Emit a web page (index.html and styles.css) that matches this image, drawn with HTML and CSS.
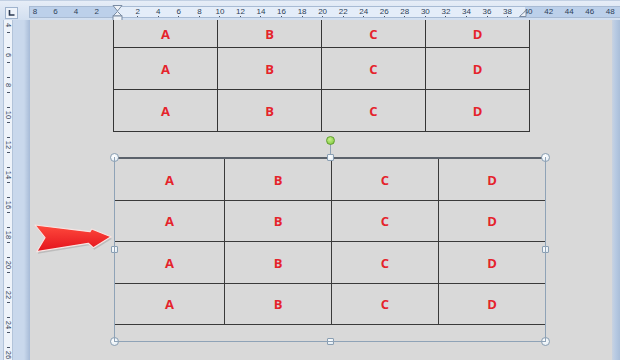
FILE: index.html
```html
<!DOCTYPE html>
<html>
<head>
<meta charset="utf-8">
<link rel="stylesheet" href="styles.css">
</head>
<body>
<div class="app">
  <div class="ruler-row">
    <div class="corner">
      <div class="tab-btn">
        <svg width="9" height="8" viewBox="0 0 9 8"><path d="M2.5 1 V6 H7.5" fill="none" stroke="#2b3a52" stroke-width="1.6"/></svg>
      </div>
    </div>
    <div class="hruler">
      <div class="track">
        <span class="n">8</span><span class="n">6</span><span class="n">4</span><span class="n">2</span><span class="n"></span>
        <span class="n t">2</span><span class="n t">4</span><span class="n t">6</span><span class="n t">8</span><span class="n t">10</span>
        <span class="n t">12</span><span class="n t">14</span><span class="n t">16</span><span class="n t">18</span><span class="n t">20</span>
        <span class="n t">22</span><span class="n t">24</span><span class="n t">26</span><span class="n t">28</span><span class="n t">30</span>
        <span class="n t">32</span><span class="n t">34</span><span class="n t">36</span><span class="n t">38</span><span class="n">40</span>
        <span class="n">42</span><span class="n">44</span><span class="n">46</span><span class="n">48</span>
      </div>
      <svg class="indent" width="11" height="16" viewBox="0 0 11 16">
        <path d="M1 0.5 H10 L5.5 6 Z" fill="#eef2f7" stroke="#7b8ca3" stroke-width="1"/>
        <path d="M5.5 6.5 L10 11 H1 Z" fill="#eef2f7" stroke="#7b8ca3" stroke-width="1"/>
        <rect x="1" y="11" width="9" height="4.5" fill="#eef2f7" stroke="#7b8ca3" stroke-width="1"/>
      </svg>
      <svg class="rindent" width="8" height="7" viewBox="0 0 8 7">
        <path d="M0.5 6.5 L7 0.5 V6.5 Z" fill="#eef2f7" stroke="#7b8ca3" stroke-width="1"/>
      </svg>
    </div>
  </div>
  <div class="body-row">
    <div class="vcol">
      <div class="vruler">
        <div class="vc"><i class="tk"></i><b class="lbl"><span>4</span></b><i class="tk"></i></div>
        <div class="vc"><i class="tk"></i><b class="lbl"><span>6</span></b><i class="tk"></i></div>
        <div class="vc"><i class="tk"></i><b class="lbl"><span>8</span></b><i class="tk"></i></div>
        <div class="vc"><i class="tk"></i><b class="lbl"><span>10</span></b><i class="tk"></i></div>
        <div class="vc"><i class="tk"></i><b class="lbl"><span>12</span></b><i class="tk"></i></div>
        <div class="vc"><i class="tk"></i><b class="lbl"><span>14</span></b><i class="tk"></i></div>
        <div class="vc"><i class="tk"></i><b class="lbl"><span>16</span></b><i class="tk"></i></div>
        <div class="vc"><i class="tk"></i><b class="lbl"><span>18</span></b><i class="tk"></i></div>
        <div class="vc"><i class="tk"></i><b class="lbl"><span>20</span></b><i class="tk"></i></div>
        <div class="vc"><i class="tk"></i><b class="lbl"><span>22</span></b><i class="tk"></i></div>
        <div class="vc"><i class="tk"></i><b class="lbl"><span>24</span></b><i class="tk"></i></div>
        <div class="vc"><i class="tk"></i><b class="lbl"><span>26</span></b><i class="tk"></i></div>
      </div>
    </div>
    <div class="page">
      <div class="tbl1">
        <div class="cell first">A</div><div class="cell first">B</div><div class="cell first">C</div><div class="cell first">D</div>
        <div class="cell">A</div><div class="cell">B</div><div class="cell">C</div><div class="cell">D</div>
        <div class="cell">A</div><div class="cell">B</div><div class="cell">C</div><div class="cell">D</div>
      </div>
      <div class="sel">
        <div class="tbl2">
          <div class="cell">A</div><div class="cell">B</div><div class="cell">C</div><div class="cell">D</div>
          <div class="cell">A</div><div class="cell">B</div><div class="cell">C</div><div class="cell">D</div>
          <div class="cell">A</div><div class="cell">B</div><div class="cell">C</div><div class="cell">D</div>
          <div class="cell">A</div><div class="cell">B</div><div class="cell">C</div><div class="cell">D</div>
        </div>
        <i class="stem"></i>
        <i class="rot"></i>
        <i class="h c tl"></i><i class="h c tr"></i><i class="h c bl"></i><i class="h c br"></i>
        <i class="h s tm"></i><i class="h s ml"></i><i class="h s mr"></i><i class="h s bm"></i>
      </div>
      <svg class="arrow" width="90" height="40" viewBox="0 0 90 40">
        <defs>
          <linearGradient id="ag" x1="0" y1="0" x2="0" y2="1">
            <stop offset="0" stop-color="#ff4a3d"/>
            <stop offset="1" stop-color="#e3121c"/>
          </linearGradient>
        </defs>
        <path d="M6 7 L61 13.7 L62.7 11 L82 18.7 L64.3 29.7 L59.3 25.3 L7.7 33.7 L16 19.7 Z" fill="#9a9a9a" opacity="0.45"/>
        <path d="M5 5 L60 11.7 L61.7 9 L81 16.7 L63.3 27.7 L58.3 23.3 L6.7 31.7 L15 17.7 Z" fill="url(#ag)" stroke="#f7e4e2" stroke-width="1.2" stroke-linejoin="round"/>
      </svg>
    </div>
    <div class="scroll"></div>
  </div>
</div>
</body>
</html>
```

FILE: styles.css
```css
* { box-sizing: border-box; margin: 0; padding: 0; }
html, body { width: 620px; height: 360px; overflow: hidden; }
body { font-family: "Liberation Sans", Arial, sans-serif; background: #c9d8ec; }

.app { display: flex; flex-direction: column; width: 620px; height: 360px; }

/* top ruler row */
.ruler-row {
  display: flex;
  height: 20px;
  flex: 0 0 20px;
  background: linear-gradient(#e6edf7, #d2dff0);
  border-top: 1px solid #c2d0e3;
}
.corner { width: 29px; flex: 0 0 29px; padding: 6px 0 0 5px; }
.tab-btn {
  width: 13px; height: 12px;
  border: 1px solid #9fb3cd;
  background: #eef3fa;
  display: flex; align-items: center; justify-content: center;
}
.hruler {
  position: relative;
  flex: 1;
  margin-top: 5px;
  height: 12px;
  border: 1px solid #a8bbd4;
  border-right: none;
  background: linear-gradient(to right, #bcd0ea 0 87px, #e4edf9 87px 495px, #bcd0ea 495px);
}
.track { display: flex; margin-left: -5.3px; }
.n {
  flex: 0 0 20.55px;
  display: flex; flex-direction: column; align-items: center;
  height: 10px;
  font-size: 8px; line-height: 9px;
  color: #2e3f58;
}
.n.t::after { content: ""; width: 1px; height: 1.5px; background: #4a5568; }
.indent { position: absolute; left: 82px; top: -2px; }
.rindent { position: absolute; left: 489px; top: 3px; }

/* body */
.body-row { display: flex; flex: 1; min-height: 0; }
.vcol {
  width: 30px; flex: 0 0 30px;
  display: flex;
  background: linear-gradient(to right, #d4e0f0 0 3px, #eef3fa 3px 13px, #c9d8ec 13px 24px, #a7bbd7 30px);
}
.vruler {
  margin-left: 3px;
  width: 10px;
  background: #eef3fa;
  border-left: 1px solid #b3c4da;
  border-right: 1px solid #b3c4da;
  overflow: hidden;
  display: flex; flex-direction: column;
}
.vc {
  flex: 0 0 30px;
  display: flex; flex-direction: column; align-items: center;
}
.vc:first-child { margin-top: -10px; }
.tk { display: block; width: 3px; height: 1px; background: #4a5568; margin-top: 7px; }
.lbl + .tk { margin-top: 0; }
.lbl {
  height: 14px; width: 8px;
  display: flex; align-items: center; justify-content: center;
  font-weight: normal;
}
.lbl span {
  display: block;
  transform: rotate(90deg);
  font-size: 7.5px; line-height: 8px;
  color: #2e3f58;
  white-space: nowrap;
}

.page {
  position: relative;
  flex: 1;
  background: #d9d9d9;
  overflow: hidden;
  display: flex; flex-direction: column; align-items: flex-start;
}
.scroll {
  width: 8px; flex: 0 0 8px;
  background: linear-gradient(to right, #c9d3e0, #b9cbe3 40%, #a9bed9);
}

/* tables */
.cell {
  background: #d9d9d9;
  display: flex; align-items: center; justify-content: center;
  color: #e5232b;
  font-family: "Open Sans", "Liberation Sans", sans-serif;
  font-weight: 700;
  font-size: 13px;
  line-height: 12px;
}
.cell.first { padding-top: 15px; }
.tbl1 {
  margin: -15px 0 0 83px;
  display: grid;
  grid-template-columns: repeat(4, 103px);
  grid-auto-rows: 41px;
  gap: 1px;
  padding: 1px;
  background: #353535;
}
.sel {
  position: relative;
  margin: 25px 0 0 84px;
  width: 432px;
  padding-bottom: 17px;
}
.sel::after {
  content: "";
  position: absolute;
  left: 0; top: 0; right: 0; bottom: 0;
  border: 1px solid #8fa3b7;
  border-top: none;
  pointer-events: none;
}
.tbl2 {
  display: grid;
  grid-template-columns: 109px 106px 106px 106px;
  grid-template-rows: 41px 40px 41px 40px;
  gap: 1px;
  padding: 0 1px 1px 1px;
  border-top: 2px solid #5b626b;
  background: #3a3a3a;
}

/* selection handles */
.h {
  position: absolute;
  display: block;
  border: 1px solid #8a9fb3;
  background: radial-gradient(circle at 40% 35%, #ffffff, #dde8f1);
}
.c { width: 9px; height: 9px; border-radius: 50%; }
.s { width: 7px; height: 7px; border-radius: 1px; }
.tl { left: -4px; top: -4px; }
.tr { left: 427px; top: -4px; }
.bl { left: -4px; top: 180px; }
.br { left: 427px; top: 180px; }
.tm { left: 213px; top: -3px; }
.bm { left: 213px; top: 181px; }
.ml { left: -3px; top: 89px; }
.mr { left: 428px; top: 89px; }
.stem {
  position: absolute; display: block;
  left: 216px; top: -13px;
  width: 1px; height: 13px;
  background: #8fa3b7;
}
.rot {
  position: absolute; display: block;
  left: 212px; top: -21px;
  width: 9px; height: 9px;
  border-radius: 50%;
  border: 1px solid #5f9e2c;
  background: radial-gradient(circle at 40% 35%, #c6f08a, #78c437);
}
.arrow { position: absolute; left: 0; top: 200px; }
```
